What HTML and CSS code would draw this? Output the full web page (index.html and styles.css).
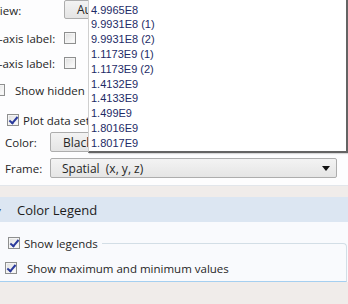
FILE: index.html
```html
<!DOCTYPE html>
<html lang="en">
<head>
    <meta charset="UTF-8">
    <meta name="viewport" content="width=device-width, initial-scale=1.0">
    <title>Plot Settings</title>
    <link rel="stylesheet" href="styles.css">
</head>
<body>
    <div class="page">
        <div class="settings">
            <div class="row row-view">
                <span class="label label-wide">View:</span>
                <span class="button button-view">Au</span>
            </div>
            <div class="row row-x">
                <span class="label label-wide">x-axis label:</span>
                <span class="check"></span>
            </div>
            <div class="row row-y">
                <span class="label label-wide">y-axis label:</span>
                <span class="check"></span>
            </div>
            <div class="row row-hidden">
                <span class="check"></span>
                <span class="text">Show hidden</span>
            </div>
            <div class="row row-plot">
                <span class="check checked"></span>
                <span class="text">Plot data set</span>
            </div>
            <div class="row row-color">
                <span class="label">Color:</span>
                <span class="button button-color">Black</span>
            </div>
            <div class="row row-frame">
                <span class="label">Frame:</span>
                <div class="combo">
                    <span>Spatial&nbsp; (x, y, z)</span>
                    <span class="arrow"></span>
                </div>
            </div>
        </div>

        <div class="section-header">
            <span class="toggle">&#9662;</span>
            <span>Color Legend</span>
        </div>

        <div class="section-body">
            <fieldset class="group">
                <legend class="row">
                    <span class="check checked"></span>
                    <span class="text">Show legends</span>
                </legend>
                <div class="row row-minmax">
                    <span class="check checked"></span>
                    <span class="text text-minmax">Show maximum and minimum values</span>
                </div>
            </fieldset>
        </div>

        <div class="footer"></div>

        <ul class="popup">
            <li>4.9965E8</li>
            <li>9.9931E8 (1)</li>
            <li>9.9931E8 (2)</li>
            <li>1.1173E9 (1)</li>
            <li>1.1173E9 (2)</li>
            <li>1.4132E9</li>
            <li>1.4133E9</li>
            <li>1.499E9</li>
            <li>1.8016E9</li>
            <li>1.8017E9</li>
        </ul>
    </div>
</body>
</html>
```

FILE: styles.css
```css
* {
    margin: 0;
    padding: 0;
    box-sizing: border-box;
}

body {
    width: 348px;
    height: 304px;
    overflow: hidden;
    background-color: #f0ecea;
    font-family: "Open Sans", "Noto Sans", sans-serif;
    font-size: 11.5px;
    color: #262626;
}

.page {
    position: relative;
    width: 348px;
    height: 304px;
    overflow: hidden;
}

.settings {
    background-color: #fdfdfe;
    height: 186px;
    border-bottom: 1px solid #e2e6eb;
}

.row {
    display: flex;
    align-items: center;
    height: 20px;
    white-space: nowrap;
}

.label {
    width: 50px;
    flex: none;
    padding-left: 5px;
}

.label-wide {
    width: 71px;
    margin-left: -7px;
    padding-left: 0;
}

.row-x { margin-top: 8px; }
.row-y { margin-top: 5px; }
.row-hidden { margin-top: 7px; margin-left: -7px; }
.row-plot { margin-top: 10px; padding-left: 7px; }
.row-color { margin-top: 2px; }
.row-frame { margin-top: 6px; }

.text {
    margin-left: 4px;
}

.row-hidden .text {
    margin-left: 10px;
}

.check {
    width: 12px;
    height: 12px;
    flex: none;
    border: 1px solid #8e8f8f;
    background: linear-gradient(135deg, #dedede, #ffffff);
    box-shadow: inset 0 0 0 1px #f4f4f4;
    position: relative;
}

.checked::after {
    content: "";
    position: absolute;
    left: 3px;
    top: 0;
    width: 3px;
    height: 7px;
    border-right: 2px solid #2a3a9c;
    border-bottom: 2px solid #2a3a9c;
    transform: rotate(40deg);
}

.button {
    height: 20px;
    border: 1px solid #adadad;
    border-radius: 2px;
    background: linear-gradient(#f3f3f3, #e4e4e4);
    display: flex;
    align-items: center;
    padding-left: 12px;
    font-size: 12px;
}

.button-view {
    width: 120px;
    height: 19px;
    margin-top: -2px;
}

.button-color {
    width: 150px;
}

.combo {
    width: 287px;
    height: 20px;
    border: 1px solid #adadad;
    border-radius: 2px;
    background: linear-gradient(#f3f3f3, #e5e5e5);
    display: flex;
    align-items: center;
    justify-content: space-between;
    padding: 0 6px 0 11px;
    font-size: 12px;
}

.arrow {
    width: 0;
    height: 0;
    border-left: 4px solid transparent;
    border-right: 4px solid transparent;
    border-top: 5px solid #111;
}

.section-header {
    margin-top: 11px;
    height: 25px;
    background-color: #dce6f2;
    display: flex;
    align-items: center;
    font-size: 13px;
    color: #1c1c1c;
}

.toggle {
    width: 21px;
    margin-left: -4px;
    font-size: 10px;
    color: #444;
}

.section-body {
    background-color: #f9fafd;
    height: 60px;
    padding-top: 11px;
}

.group {
    margin-left: -2px;
    width: 349px;
    height: 49px;
    border: 1px solid #d3dee6;
    border-bottom-color: #a5cff0;
    border-top-right-radius: 4px;
    padding: 0;
}

.group legend {
    padding: 0 4px 0 9px;
}

.row-minmax {
    margin-top: 5px;
    padding-left: 6px;
}

.text-minmax {
    margin-left: 10px;
}

.footer {
    height: 22px;
    background-color: #f0ecea;
}

.popup {
    position: absolute;
    left: 88px;
    top: 0;
    width: 260px;
    list-style: none;
    padding: 2.6px 0 0 2px;
    background-color: #ffffff;
    border-left: 1px solid #cfcfcf;
    border-right: 2px solid #646464;
    border-bottom: 2px solid #646464;
    box-shadow: 1px 1px 1px rgba(0, 0, 0, 0.15);
    font-family: "Liberation Sans", Arial, sans-serif;
    font-size: 11px;
    color: #1d2b66;
}

.popup li {
    height: 14.8px;
    line-height: 14.8px;
}
```
